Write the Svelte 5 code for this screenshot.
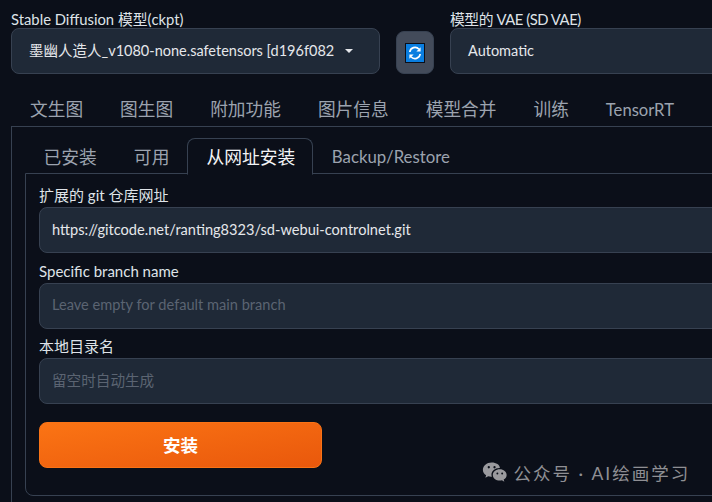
<script>
	const mainTabs = ['文生图', '图生图', '附加功能', '图片信息', '模型合并', '训练', 'TensorRT'];
	const subTabs = ['已安装', '可用', '从网址安装', 'Backup/Restore'];
	let activeSub = $state('从网址安装');

	// latin tab names run a bit smaller than the chinese ones
	const isLatin = (name) => /^[a-z/]+$/i.test(name);
</script>

<div class="page">
	<div class="top-row">
		<div class="field model">
			<span class="top-label">Stable Diffusion 模型(ckpt)</span>
			<div class="select">
				<span class="select-value">墨幽人造人_v1080-none.safetensors [d196f082</span>
				<span class="caret"></span>
			</div>
		</div>
		<button class="refresh" aria-label="刷新">
			<svg width="20" height="20" viewBox="0 0 20 20">
				<rect width="20" height="20" fill="#0b0f19" />
				<rect x="1" y="1" width="18" height="18" fill="#0a7ee0" />
				<path d="M4.8 9A5.3 5.3 0 0 1 14 6.2" fill="none" stroke="#fff" stroke-width="1.7" />
				<path d="M15.2 11A5.3 5.3 0 0 1 6 13.8" fill="none" stroke="#fff" stroke-width="1.7" />
				<path d="M15.6 4.2V8.4H11.4Z" fill="#fff" />
				<path d="M4.4 15.8V11.6H8.6Z" fill="#fff" />
			</svg>
		</button>
		<div class="field vae">
			<span class="top-label">模型的 VAE (SD VAE)</span>
			<div class="select">
				<span class="select-value">Automatic</span>
			</div>
		</div>
	</div>

	<nav class="main-tabs">
		{#each mainTabs as tab}
			<button class="main-tab" class:latin={isLatin(tab)}>{tab}</button>
		{/each}
	</nav>

	<div class="outer-panel">
		<nav class="sub-tabs">
			{#each subTabs as tab}
				<button
					class="sub-tab"
					class:active={activeSub === tab}
					class:latin={isLatin(tab)}
					onclick={() => (activeSub = tab)}>{tab}</button
				>
			{/each}
		</nav>

		<div class="inner-panel">
			<label class="form-row">
				<span>扩展的 git 仓库网址</span>
				<input class="text-input" value="https://gitcode.net/ranting8323/sd-webui-controlnet.git" />
			</label>
			<label class="form-row">
				<span>Specific branch name</span>
				<input class="text-input" placeholder="Leave empty for default main branch" />
			</label>
			<label class="form-row">
				<span>本地目录名</span>
				<input class="text-input" placeholder="留空时自动生成" />
			</label>
			<button class="install">安装</button>
		</div>
	</div>

	<div class="watermark">
		<svg width="26" height="21" viewBox="0 0 27 22">
			<path d="M10 0.5C4.8 0.5 0.8 4 0.8 8.2c0 2.4 1.3 4.4 3.4 5.8l-.8 2.6 3-1.6c1 .3 2 .4 3 .4h.8c-.3-.8-.4-1.500-.4-2.200 0-3.900 3.600-7 8.200-7h.6C18.600 2.900 14.700 0.500 10 0.500Z" fill="#9a9a9e" />
			<path d="M18.500 7.500c-4 0-7.300 2.700-7.300 6s3.300 6 7.300 6c.8 0 1.600-.1 2.300-.3l2.500 1.400-.7-2.200c1.900-1.100 3.100-2.900 3.100-4.900 0-3.300-3.200-6-7.200-6Z" fill="#9a9a9e" />
			<circle cx="7" cy="5.500" r="1.200" fill="#0b0f19" />
			<circle cx="13" cy="5.500" r="1.200" fill="#0b0f19" />
			<circle cx="16" cy="12" r="1" fill="#0b0f19" />
			<circle cx="21" cy="12" r="1" fill="#0b0f19" />
		</svg>
		<span>公众号 · AI绘画学习</span>
	</div>
</div>

<style>
	:global(body) {
		margin: 0;
		background: #0b0f19;
		overflow: hidden;
	}

	.page {
		position: relative;
		width: 712px;
		height: 502px;
		overflow: hidden;
		background: #0b0f19;
		color: #e5e7eb;
		font-family: Lato, "Noto Sans CJK SC", sans-serif;
	}

	.top-row {
		display: flex;
		align-items: flex-end;
		gap: 16px;
		padding: 10px 0 0 11px;
	}

	.field {
		display: flex;
		flex-direction: column;
		flex-shrink: 0;
	}

	.model {
		width: 369px;
	}

	.vae {
		width: 320px;
	}

	.top-label {
		font-size: 14.800px;
		line-height: 18px;
		color: #dfe3e8;
	}

	.vae .top-label {
		letter-spacing: -0.45px;
	}

	.select {
		display: flex;
		align-items: center;
		box-sizing: border-box;
		height: 46px;
		padding: 0 17px;
		background: #1f2937;
		border: 1px solid #374151;
		border-radius: 8px;
		font-size: 14.500px;
		line-height: 20px;
		color: #e5e7eb;
		white-space: nowrap;
	}

	.caret {
		width: 0;
		height: 0;
		margin-left: 11px;
		border-left: 4px solid transparent;
		border-right: 4px solid transparent;
		border-top: 4px solid #e5e7eb;
	}

	.refresh {
		display: flex;
		align-items: center;
		justify-content: center;
		flex-shrink: 0;
		width: 38px;
		height: 43px;
		padding: 0;
		background: #434b5a;
		border: 1px solid #374151;
		border-radius: 8px;
	}

	.main-tabs {
		display: flex;
		gap: 37px;
		height: 52px;
		margin-left: 11px;
		padding: 0 0 0 19px;
		align-items: flex-end;
	}

	.main-tab {
		flex-shrink: 0;
		height: 31px;
		padding: 0 0 1px;
		background: none;
		border: none;
		font-family: inherit;
		font-size: 17.700px;
		line-height: 30px;
		color: #9ca3af;
		white-space: nowrap;
	}

	.main-tab.latin {
		font-size: 16.600px;
	}

	.outer-panel {
		width: 800px;
		height: 380px;
		margin-left: 11px;
		box-sizing: border-box;
		border-top: 1px solid #374151;
		border-left: 1px solid #374151;
		padding: 11px 0 0 13px;
	}

	.sub-tabs {
		display: flex;
		height: 36px;
		align-items: stretch;
	}

	.sub-tab {
		box-sizing: border-box;
		height: 36px;
		padding: 0 17.500px;
		background: none;
		border: 1px solid transparent;
		border-radius: 8px 8px 0 0;
		font-family: inherit;
		font-size: 17.800px;
		line-height: 36px;
		color: #9ca3af;
		white-space: nowrap;
	}

	.sub-tab.latin {
		font-size: 16.800px;
	}

	.sub-tab.active {
		position: relative;
		z-index: 1;
		margin-left: -1px;
		padding: 0 17px 0 18.500px;
		height: 37px;
		color: #f3f4f6;
		background: #0b0f19;
		border-color: #374151;
		border-bottom-color: #0b0f19;
	}

	.inner-panel {
		box-sizing: border-box;
		height: 323px;
		margin-top: -1px;
		padding: 13px 0 0 13px;
		border: 1px solid #374151;
		border-radius: 0 0 0 8px;
	}

	.form-row {
		display: flex;
		flex-direction: column;
		margin-bottom: 9.500px;
	}

	.form-row span {
		padding-bottom: 2.500px;
		font-size: 15px;
		line-height: 17.500px;
		color: #dfe3e8;
	}

	.text-input {
		box-sizing: border-box;
		width: 720px;
		height: 46px;
		padding: 0 12px 2px;
		background: #1f2937;
		border: 1px solid #374151;
		border-radius: 8px;
		font-family: inherit;
		font-size: 14.600px;
		color: #e5e7eb;
		outline: none;
	}

	.text-input::placeholder {
		color: #5b6472;
		opacity: 1;
	}

	.install {
		display: block;
		width: 283px;
		height: 46px;
		margin-top: 18px;
		padding: 0 0 2px;
		background: linear-gradient(to bottom right, #fb7414, #e9580c);
		border: 1px solid #f97316;
		border-radius: 8px;
		font-family: inherit;
		font-size: 17.500px;
		font-weight: 700;
		color: #fff;
	}

	.watermark {
		position: absolute;
		left: 482px;
		top: 460px;
		display: flex;
		align-items: center;
		gap: 5.500px;
		font-size: 17.500px;
		letter-spacing: 2px;
		color: #8f8f94;
		white-space: nowrap;
	}
</style>
